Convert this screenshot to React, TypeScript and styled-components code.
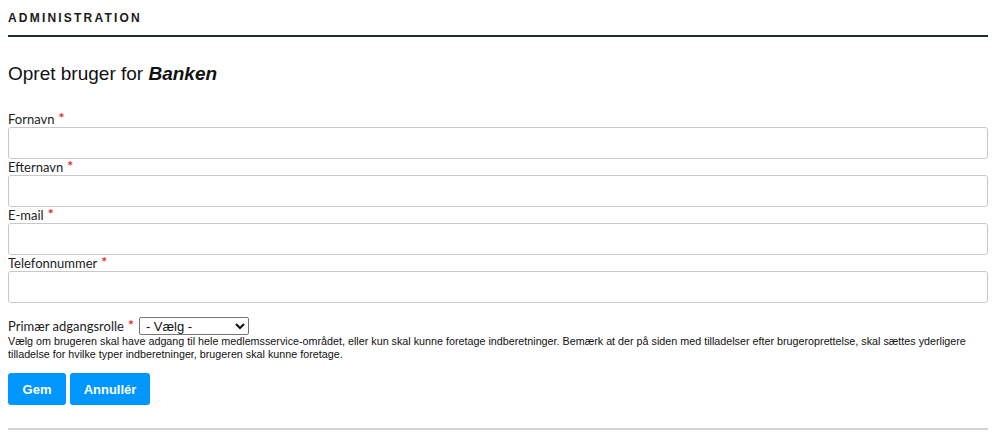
import { createGlobalStyle, styled } from "styled-components"

const GlobalStyle = createGlobalStyle`
    html, body {
        margin: 0;
        padding: 0;
        background: #ffffff;
    }
    body {
        font-family: "Lato", "Liberation Sans", Arial, sans-serif;
        color: #222;
    }
`;

const Page = styled.div`
    width: 980px;
    padding: 0 12px 0 8px;
    display: flex;
    flex-direction: column;
`;

const SectionHeader = styled.div`
    padding-top: 11px;
    height: 24px;
    border-bottom: 2px solid #1d2b2b;
    font-family: "Liberation Sans", Arial, sans-serif;
    font-size: 12px;
    font-weight: bold;
    letter-spacing: 2.2px;
    line-height: 14px;
    color: #1a1a1a;
`;

const Title = styled.h1`
    margin: 26px 0 0;
    font-family: "Liberation Sans", Arial, sans-serif;
    font-size: 19px;
    font-weight: normal;
    line-height: 22px;
    color: #111;

    em {
        font-weight: bold;
    }
`;

const Form = styled.form`
    margin-top: 26px;
    display: flex;
    flex-direction: column;
`;

const Label = styled.label`
    display: block;
    font-size: 13px;
    line-height: 16px;
    height: 16px;
    color: #222;
`;

const Required = styled.span`
    color: #e8232b;
    margin-left: 4px;
    font-size: 14px;
    font-weight: bold;
    line-height: 0;
    vertical-align: 1px;
`;

const TextInput = styled.input`
    display: block;
    box-sizing: border-box;
    width: 100%;
    height: 32px;
    margin: 0;
    border: 1px solid #c8c8c8;
    border-radius: 3px;
    background: #fff;
    font-size: 13px;
    padding: 4px 8px;
`;

const RoleRow = styled.div`
    margin-top: 14px;
    display: flex;
    align-items: center;
    gap: 5px;
    height: 18px;
`;

const RoleLabel = styled(Label)`
    display: inline-block;
`;

const Select = styled.select`
    width: 110px;
    height: 18px;
    font-family: "Liberation Sans", Arial, sans-serif;
    font-size: 13px;
    border: 1px solid #767676;
    border-radius: 2px;
    padding: 0 2px;
    background: #fff;
    color: #111;
`;

const HelpText = styled.p`
    margin: 0;
    font-family: "Liberation Sans", Arial, sans-serif;
    font-size: 10.75px;
    line-height: 13px;
    color: #111;
`;

const Buttons = styled.div`
    margin-top: 12px;
    display: flex;
    gap: 4px;
`;

const Button = styled.button<{ $width: number }>`
    width: ${p => p.$width}px;
    height: 32px;
    border: none;
    border-radius: 3px;
    background: #0096ff;
    color: #fff;
    font-family: "Liberation Sans", Arial, sans-serif;
    font-weight: bold;
    font-size: 13px;
    cursor: pointer;
`;

const Divider = styled.hr`
    margin: 23px 0 0;
    border: none;
    border-top: 2px solid #d4d4d4;
`;

const fields = [
    { id: "fornavn", label: "Fornavn", type: "text" },
    { id: "efternavn", label: "Efternavn", type: "text" },
    { id: "email", label: "E-mail", type: "email" },
    { id: "telefon", label: "Telefonnummer", type: "tel" },
];

export default function App() {
    return (
        <>
            <GlobalStyle />
            <Page>
                <SectionHeader>ADMINISTRATION</SectionHeader>
                <Title>Opret bruger for <em>Banken</em></Title>
                <Form onSubmit={e => e.preventDefault()}>
                    {fields.map(f => (
                        <div key={f.id}>
                            <Label htmlFor={f.id}>
                                {f.label}<Required>*</Required>
                            </Label>
                            <TextInput id={f.id} type={f.type} />
                        </div>
                    ))}
                    <RoleRow>
                        <RoleLabel htmlFor="rolle">
                            Primær adgangsrolle<Required>*</Required>
                        </RoleLabel>
                        <Select id="rolle" defaultValue="">
                            <option value="">- Vælg -</option>
                        </Select>
                    </RoleRow>
                    <HelpText>
                        Vælg om brugeren skal have adgang til hele medlemsservice-området, eller kun skal kunne foretage indberetninger. Bemærk at der på siden med tilladelser efter brugeroprettelse, skal sættes yderligere tilladelse for hvilke typer indberetninger, brugeren skal kunne foretage.
                    </HelpText>
                    <Buttons>
                        <Button type="submit" $width={58}>Gem</Button>
                        <Button type="button" $width={80}>Annullér</Button>
                    </Buttons>
                </Form>
                <Divider />
            </Page>
        </>
    );
}
